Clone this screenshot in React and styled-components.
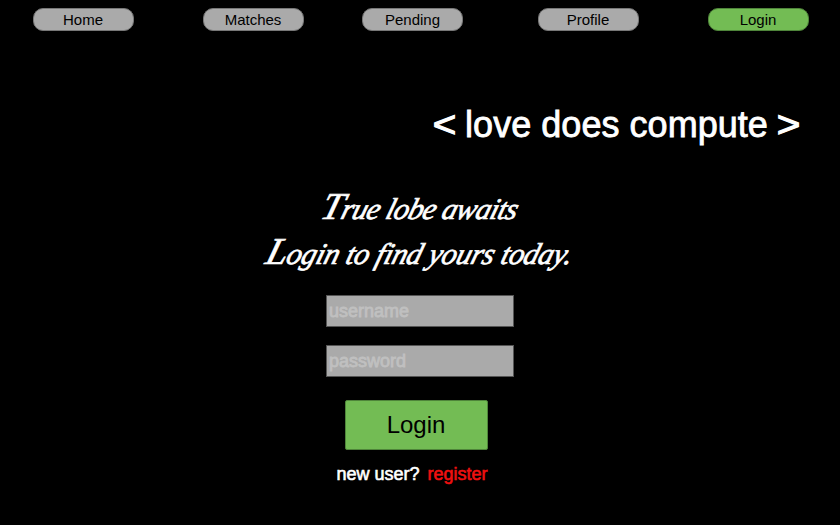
import React from 'react';
import styled, { createGlobalStyle } from 'styled-components';

const GlobalStyle = createGlobalStyle`
  * { box-sizing: border-box; }
  body {
    margin: 0;
    background: #000;
    color: #fff;
    font-family: "Liberation Sans", Arial, sans-serif;
    overflow: hidden;
  }
`;

const Page = styled.div`
  width: 840px;
  height: 525px;
  background: #000;
  display: flex;
  flex-direction: column;
`;

const Nav = styled.nav`
  display: flex;
  height: 31px;
  padding-top: 8px;
`;

const NavButton = styled.button`
  width: 101px;
  height: 23px;
  margin: 0 0 0 ${(p) => p.$gap}px;
  padding: 0;
  border: 1px solid ${(p) => (p.$active ? '#4f853a' : '#777')};
  border-radius: 10px;
  background: ${(p) => (p.$active ? '#73bc54' : '#aaa')};
  color: #000;
  font: 15px/21px "Liberation Sans", Arial, sans-serif;
`;

const Title = styled.h1`
  display: flex;
  gap: 10px;
  align-self: flex-end;
  margin: 73px 41px 0 0;
  font-size: 36px;
  line-height: 42px;
  font-weight: 400;
  letter-spacing: 0.04px;
  white-space: nowrap;
  -webkit-text-stroke: 0.8px #fff;
`;

const Bracket = styled.span`
  display: inline-block;
  transform: scaleX(1.12);
  -webkit-text-stroke: 1.2px #fff;
`;

const Tagline = styled.div`
  display: flex;
  flex-direction: column;
  align-items: center;
  margin-top: 40px;
`;

const TaglineLine = styled.p`
  margin: 0;
  height: 45px;
  font: italic 400 30px/45px "Liberation Serif", cursive;
  letter-spacing: ${(p) => p.$spacing}px;
  white-space: nowrap;
  transform: skewX(-16deg);
  -webkit-text-stroke: 0.7px #fff;
  &::first-letter { font-size: 38px; line-height: 30px; }
`;

const Form = styled.form`
  display: flex;
  flex-direction: column;
  align-items: center;
  margin-top: 19px;
`;

const Field = styled.input`
  width: 188px;
  height: 32px;
  margin: 0 0 18px;
  padding: 1px 2px;
  border: 1px solid #555;
  border-radius: 0;
  background: #aaa;
  font: 18px "Liberation Sans", Arial, sans-serif;
  -webkit-text-stroke: 0.8px #c0c0c0;
  outline: none;
  &::placeholder { color: #c0c0c0; opacity: 1; }
`;

const Submit = styled.button`
  width: 143px;
  height: 50px;
  margin: 5px 8px 0 0;
  padding: 0;
  border: 1px solid #4f853a;
  border-radius: 2px;
  background: #73bc54;
  color: #000;
  font: 24px "Liberation Sans", Arial, sans-serif;
`;

const Register = styled.p`
  display: flex;
  gap: 8px;
  align-self: center;
  margin: 14px 16px 0 0;
  font-size: 18px;
  line-height: 20px;
  -webkit-text-stroke: 0.6px #fff;
`;

const RegisterLink = styled.a`
  color: #f01010;
  -webkit-text-stroke: 0.6px #f01010;
`;

const links = [
  { label: 'Home', gap: 32.5 },
  { label: 'Matches', gap: 69 },
  { label: 'Pending', gap: 58.5 },
  { label: 'Profile', gap: 74.5 },
  { label: 'Login', gap: 69, active: true },
];

export default function App() {
  return (
    <Page>
      <GlobalStyle />
      <Nav>
        {links.map((l) => (
          <NavButton key={l.label} $gap={l.gap} $active={l.active}>{l.label}</NavButton>
        ))}
      </Nav>
      <Title>
        <Bracket>&lt;</Bracket>
        <span>love does compute</span>
        <Bracket>&gt;</Bracket>
      </Title>
      <Tagline>
        <TaglineLine $spacing={-0.65}>True lobe awaits</TaglineLine>
        <TaglineLine $spacing={-0.3}>Login to find yours today.</TaglineLine>
      </Tagline>
      <Form onSubmit={(e) => e.preventDefault()}>
        <Field placeholder="username" />
        <Field type="password" placeholder="password" />
        <Submit>Login</Submit>
      </Form>
      <Register>
        <span>new user?</span>
        <RegisterLink>register</RegisterLink>
      </Register>
    </Page>
  );
}
